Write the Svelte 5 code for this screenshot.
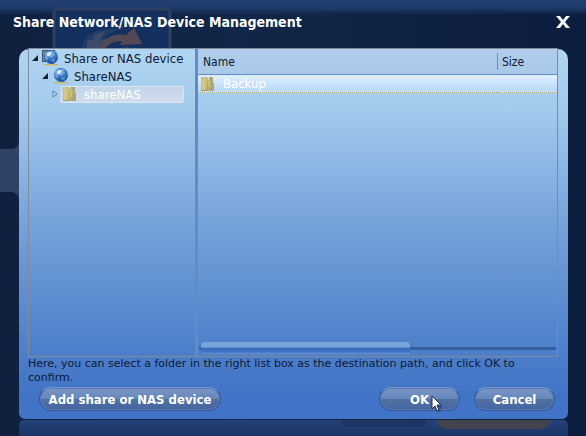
<script lang="ts">
  interface Folder {
    name: string;
    size: string;
  }

  let open = $state(true);
  let rootExpanded = $state(true);
  let serverExpanded = $state(true);
  let selected = $state("Backup");

  const folders: Folder[] = [{ name: "Backup", size: "" }];
</script>

{#snippet globe()}
  <circle cx="9" cy="7" r="7" fill="#3a72bb" />
  <path d="M3 4Q6 0 12 1L13 5L10 8L7 7L5 10L3 8Z" fill="#6fa4dd" />
  <path d="M5 3Q8 1 10 3L8 6L5 6Z" fill="#d3eafb" />
  <path d="M6 10Q11 12 16 7Q15 12 11 14Q8 14 6 12Z" fill="#1f57a5" />
  <path d="M9 10l4-1v2l-3 1z" fill="#5c96d6" />
  <path d="M2 14h14v1H2z" fill="#c2b05e" />
  <path d="M7 14h5v2H7z" fill="#d6c169" />
{/snippet}

{#snippet folder()}
  <svg class="icon" viewBox="0 0 16 16" aria-hidden="true">
    <path d="M1 1h6l1 1v13H1z" fill="#c9bd7d" />
    <path d="M2 2h3v12H2z" fill="#d3c88c" />
    <path d="M9 1h4v6h1v8H9z" fill="#aaa776" />
    <path d="M7 5l4-3v9l-3 4H6z" fill="#b9ad69" />
    <path d="M8 5l2-1v6l-2 2z" fill="#cbbf7c" />
    <path d="M11 5h1v6h-1z" fill="#83b2c0" />
    <path d="M1 14h7v1H1z" fill="#9f9c68" />
  </svg>
{/snippet}

<div class="backdrop">
  <svg class="logo" viewBox="0 0 120 50" aria-hidden="true">
    <rect x="2" y="2" width="116" height="70" rx="4" fill="#14305f" stroke="#2d405f" stroke-width="3" />
    <path d="M29 50Q27 28 49 23L68 21L55 28L48 38L43 50Z" fill="#203d68" />
    <path d="M35 50V34L42 32V28L53 24L47 35L54 31L48 50Z" fill="#3c4b68" />
    <path d="M46 43Q54 25 74 28L82 21L90 37L68 38L70 34Q56 34 50 46Z" fill="#544855" />
    <path d="M61 44L75 40L86 43L81 50H57Z" fill="#3d4260" />
  </svg>
  <div class="notch"></div>

  {#if open}
    <main class="dialog">
      <header class="titlebar">
        <h1>Share Network/NAS Device Management</h1>
        <button class="close" aria-label="Close" onclick={() => (open = false)}>
          <svg viewBox="0 0 14 12" aria-hidden="true">
            <path d="M0 0H4L7 4L10 0H14L9 6L14 12H10L7 8L4 12H0L5 6Z" fill="#f2f5f6" />
          </svg>
        </button>
      </header>

      <section class="panel">
        <div class="browser">
          <nav class="tree" aria-label="Devices">
            <div class="node root">
              <button class="toggle" aria-label="Toggle devices" onclick={() => (rootExpanded = !rootExpanded)}>
                <svg viewBox="0 0 6 6" aria-hidden="true"><path d="M6 0V6H0Z" fill="#18212b" /></svg>
              </button>
              <svg class="icon" viewBox="0 0 16 16" aria-hidden="true">
                <path d="M0 0h13v12H0z" fill="#46515d" />
                <path d="M1 1h4v10H1z" fill="#778798" />
                {@render globe()}
              </svg>
              <span class="label">Share or NAS device</span>
            </div>
            {#if rootExpanded}
              <div class="node server">
                <button class="toggle" aria-label="Toggle ShareNAS" onclick={() => (serverExpanded = !serverExpanded)}>
                  <svg viewBox="0 0 6 6" aria-hidden="true"><path d="M6 0V6H0Z" fill="#18212b" /></svg>
                </button>
                <svg class="icon" viewBox="0 0 16 16" aria-hidden="true">{@render globe()}</svg>
                <span class="label">ShareNAS</span>
              </div>
              {#if serverExpanded}
                <div class="node share">
                  <button class="toggle" aria-label="Expand shareNAS">
                    <svg viewBox="0 0 6 8" aria-hidden="true">
                      <path d="M1 1L5 4L1 7Z" fill="#c3dff5" stroke="#5c7fa6" />
                    </svg>
                  </button>
                  <div class="current">
                    {@render folder()}
                    <span class="label">shareNAS</span>
                  </div>
                </div>
              {/if}
            {/if}
          </nav>

          <div class="list">
            <table>
              <thead>
                <tr>
                  <th>Name</th>
                  <th class="size">Size</th>
                </tr>
              </thead>
              <tbody>
                {#each folders as item}
                  <tr class:selected={selected === item.name} onclick={() => (selected = item.name)}>
                    <td>
                      <div class="entry">
                        {@render folder()}
                        <span>{item.name}</span>
                      </div>
                    </td>
                    <td>{item.size}</td>
                  </tr>
                {/each}
              </tbody>
            </table>
            <div class="scrollbar"><div class="thumb"></div></div>
          </div>
        </div>

        <p>Here, you can select a folder in the right list box as the destination path, and click OK to confirm.</p>

        <footer>
          <button class="pill add">Add share or NAS device</button>
          <button class="pill ok">
            OK
            <svg class="cursor" viewBox="0 0 12 18" aria-hidden="true">
              <path d="M2 2L11 12L9 17L5 16Z" fill="#263a68" opacity="0.5" />
              <path d="M1 1V14L4 11L6 16L8 15L6 10H10Z" fill="#fff" stroke="#18264b" />
            </svg>
          </button>
          <button class="pill" onclick={() => (open = false)}>Cancel</button>
        </footer>
      </section>
    </main>
  {/if}
  <div class="dock">
    <span class="ghost"></span>
    <span class="ghost warm"></span>
  </div>
</div>

<style>
  :global(body) {
    margin: 0;
    background: #0e1f42;
  }

  .backdrop {
    position: relative;
    display: flex;
    flex-direction: column;
    box-sizing: border-box;
    min-height: 100vh;
    padding: 0 18px 0 19px;
    overflow: hidden;
    background:
      linear-gradient(#203f70, #1d3a69 8px, transparent 15px),
      linear-gradient(90deg, #10203f, #112648 40%, #0d1d3d);
    font-family: "DejaVu Sans Condensed", Tahoma, "DejaVu Sans", sans-serif;
    font-size: 12px;
    color: #0c1a34;
  }

  .logo {
    position: absolute;
    left: 52px;
    top: 7px;
    width: 120px;
    height: 50px;
  }

  .notch {
    position: absolute;
    left: 0;
    top: 149px;
    width: 19px;
    height: 43px;
    background: #2e4365;
  }

  .notch::before,
  .notch::after {
    content: "";
    position: absolute;
    left: 0;
    width: 19px;
    height: 8px;
    background: #10213f;
  }

  .notch::before {
    top: -8px;
    border-bottom-right-radius: 8px;
    box-shadow: 8px 0 #2e4365;
  }

  .notch::after {
    bottom: -8px;
    border-top-right-radius: 8px;
    box-shadow: 8px 0 #2e4365;
  }

  .dialog {
    position: relative;
    flex: 1;
    display: flex;
    flex-direction: column;
  }

  button {
    padding: 0;
    border: none;
    background: none;
    font-family: inherit;
  }

  svg {
    display: block;
  }

  .titlebar {
    display: flex;
    align-items: center;
    justify-content: space-between;
    height: 44px;
    margin: 0 -2px 5px -6px;
  }

  h1 {
    margin: 0;
    font-size: 14px;
    font-weight: bold;
    color: #fff;
    white-space: nowrap;
  }

  .close svg {
    width: 14px;
    height: 12px;
  }

  .panel {
    flex: 1;
    display: flex;
    flex-direction: column;
    padding: 0 10px 8px 9px;
    border-radius: 10px 10px 6px 6px;
    background: linear-gradient(#b0d5f2, #a3cbed 16%, #79a5dc 45%, #5182cb 78%, #4173c6 94%);
  }

  .browser {
    flex: 1;
    display: flex;
    margin-top: -1px;
    border: 1px solid #84899a;
  }

  .tree {
    box-sizing: border-box;
    flex: 0 0 167px;
    border-right: 1px solid #84899a;
  }

  .node {
    display: flex;
    align-items: center;
    height: 18px;
    white-space: nowrap;
  }

  .root {
    padding-left: 3px;
  }

  .server {
    padding-left: 13px;
  }

  .share {
    padding-left: 23px;
  }

  .toggle {
    flex: none;
    width: 8px;
  }

  .toggle svg {
    width: 6px;
  }

  .icon {
    flex: none;
    width: 16px;
    height: 16px;
    margin-left: 2px;
  }

  .label {
    margin-left: 6px;
    font-size: 13px;
  }

  .current {
    flex: 1;
    display: flex;
    align-items: center;
    box-sizing: border-box;
    height: 17px;
    margin-right: 11px;
    border: 1px solid #dbe6f3;
    border-left: none;
    border-radius: 2px;
    background: linear-gradient(#c2d5ea, #d2dcec);
    color: #fff;
  }

  .list {
    flex: 1;
    display: flex;
    flex-direction: column;
    justify-content: space-between;
    border-left: 1px solid #84899a;
    box-shadow: -1px 0 #5a87c4;
    margin-left: 1px;
  }

  table {
    width: 100%;
    border-collapse: collapse;
    table-layout: fixed;
  }

  th {
    height: 25px;
    padding: 0 0 0 5px;
    border-bottom: 1px solid #648fc9;
    background: linear-gradient(#b1cdeb, #a9c9e9);
    font-weight: normal;
    text-align: left;
  }

  .size {
    width: 55px;
    background:
      linear-gradient(#628fc8, #628fc8) 0 4px / 1px 17px no-repeat,
      linear-gradient(#b1cdeb, #a9c9e9);
  }

  td {
    height: 16px;
    padding: 0;
  }

  .selected td {
    border-top: 1px dotted #8e9db0;
    border-bottom: 1px dotted #b0a168;
    background: linear-gradient(#e2f0fe, #cce3fb 45%, #b9d8f7 90%, #dbecfd);
    color: #fff;
  }

  .entry {
    display: flex;
    align-items: center;
    gap: 7px;
    height: 17px;
    font-size: 13px;
  }

  .scrollbar {
    margin: 0 1px;
    padding-left: 2px;
    padding-bottom: 1px;
    background: linear-gradient(#345e9d, #345e9d) 0 5px / 100% 3px no-repeat;
  }

  .thumb {
    width: 59%;
    height: 13px;
    border-radius: 4px;
    background: linear-gradient(#7ba5d9 0 30%, #6794d3 42%, #3a6bba 46%, #4071c2 75%, #6390d3 90%, #4d7dcb);
  }

  p {
    margin: 0;
    padding-right: 16px;
    font-family: "DejaVu Sans", Verdana, sans-serif;
    font-size: 11px;
    line-height: 14px;
  }

  footer {
    display: flex;
    gap: 14px;
    margin: 2px 3px 0 11px;
  }

  .pill {
    position: relative;
    box-sizing: border-box;
    width: 81px;
    height: 24px;
    border: 1px solid #33599c;
    border-top-color: #6d96cd;
    border-radius: 12px;
    background: linear-gradient(#7a98c6, #6787bb 48%, #50719f 52%, #4465a4);
    box-shadow: inset 0 0 0 1px #5b7cb3;
    font-size: 13px;
    font-weight: bold;
    color: #fff;
    white-space: nowrap;
  }

  .add {
    width: 182px;
    margin-right: auto;
  }

  .cursor {
    position: absolute;
    left: 51px;
    top: 7px;
    width: 12px;
    height: 18px;
  }

  .dock {
    display: flex;
    justify-content: flex-end;
    gap: 10px;
    box-sizing: border-box;
    height: 16px;
    margin-top: 1px;
    padding-right: 17px;
    border-radius: 5px 5px 0 0;
    background: linear-gradient(#23437a, #1b3464);
  }

  .ghost {
    width: 86px;
    height: 7px;
    border-radius: 0 0 12px 12px;
    background: #1c3563;
  }

  .warm {
    width: 114px;
    height: 9px;
    background: #43424f;
  }
</style>
